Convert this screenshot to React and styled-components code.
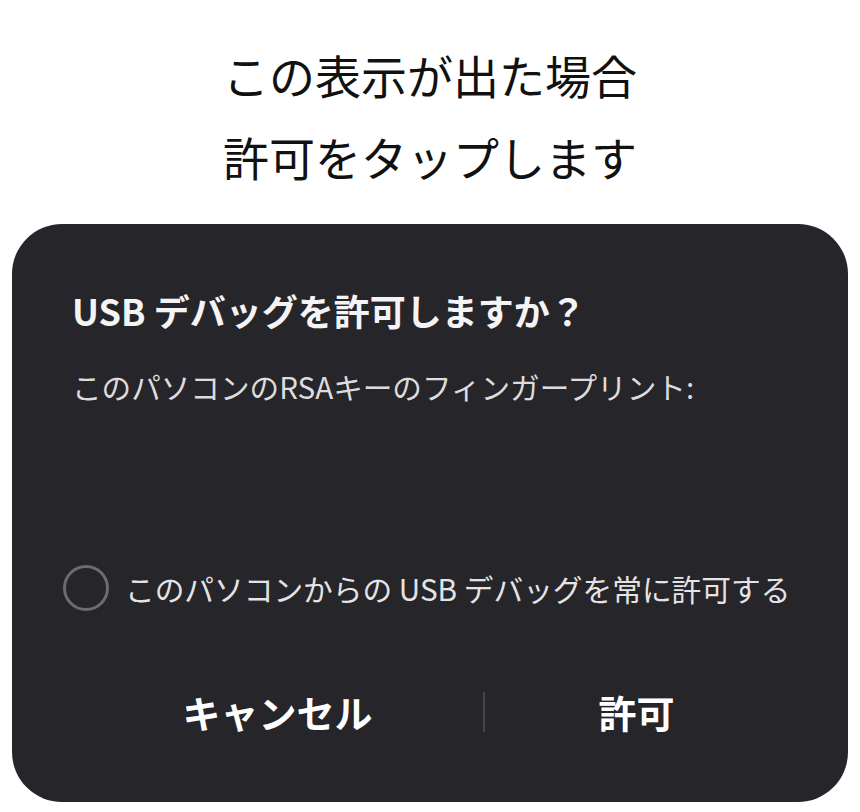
import React from "react";
import styled, { createGlobalStyle } from "styled-components";

const Global = createGlobalStyle`
  html, body { margin: 0; padding: 0; background: #ffffff; }
  body { font-family: "Noto Sans CJK JP", "Noto Sans", sans-serif; }
`;

const Page = styled.div`
  width: 860px;
  height: 812px;
  display: flex;
  flex-direction: column;
  align-items: center;
  background: #ffffff;
  overflow: hidden;
`;

const Caption = styled.div`
  padding-top: 33px;
  display: flex;
  flex-direction: column;
  align-items: center;
  color: #111111;
  font-size: 46px;
  line-height: 82px;
  font-weight: 400;
`;

const Dialog = styled.div`
  margin-top: 27px;
  width: 836px;
  height: 578px;
  box-sizing: border-box;
  background: #262529;
  border-radius: 50px;
  padding: 66px 60px 60px 60px;
  display: flex;
  flex-direction: column;
`;

const Title = styled.div`
  color: #f4f4f6;
  font-size: 36px;
  line-height: 40px;
  font-weight: 700;
  white-space: nowrap;
`;

const Message = styled.div`
  margin-top: 37px;
  color: #dcdcdf;
  font-size: 29.6px;
  line-height: 40px;
  white-space: nowrap;
`;

const CheckRow = styled.label`
  margin-top: 157px;
  margin-left: -9px;
  margin-right: -40px;
  display: flex;
  align-items: center;
  gap: 16px;
  height: 48px;
  color: #e4e4e6;
  font-size: 29.7px;
  white-space: nowrap;
`;

const Radio = styled.span`
  width: 46px;
  height: 46px;
  box-sizing: border-box;
  border: 3px solid #6c6c70;
  border-radius: 50%;
  flex: none;
`;

const Buttons = styled.div`
  margin-top: 70px;
  height: 60px;
  display: flex;
  align-items: center;
`;

const ActionButton = styled.button`
  flex: ${(p) => (p.$basis ? `0 0 ${p.$basis}px` : "1 1 0")};
  min-width: 0;
  background: none;
  border: none;
  padding: 0;
  color: #ffffff;
  font-family: inherit;
  font-size: 38px;
  font-weight: 700;
  line-height: 60px;
  cursor: pointer;
`;

const Divider = styled.span`
  width: 2px;
  height: 40px;
  background: #45454a;
  flex: none;
`;

export default function App() {
  return (
    <>
      <Global />
      <Page>
        <Caption>
          <div>この表示が出た場合</div>
          <div>許可をタップします</div>
        </Caption>
        <Dialog>
          <Title>USB デバッグを許可しますか？</Title>
          <Message>このパソコンのRSAキーのフィンガープリント:</Message>
          <CheckRow>
            <Radio />
            <span>このパソコンからの USB デバッグを常に許可する</span>
          </CheckRow>
          <Buttons>
            <ActionButton $basis={411}>キャンセル</ActionButton>
            <Divider />
            <ActionButton>許可</ActionButton>
          </Buttons>
        </Dialog>
      </Page>
    </>
  );
}
